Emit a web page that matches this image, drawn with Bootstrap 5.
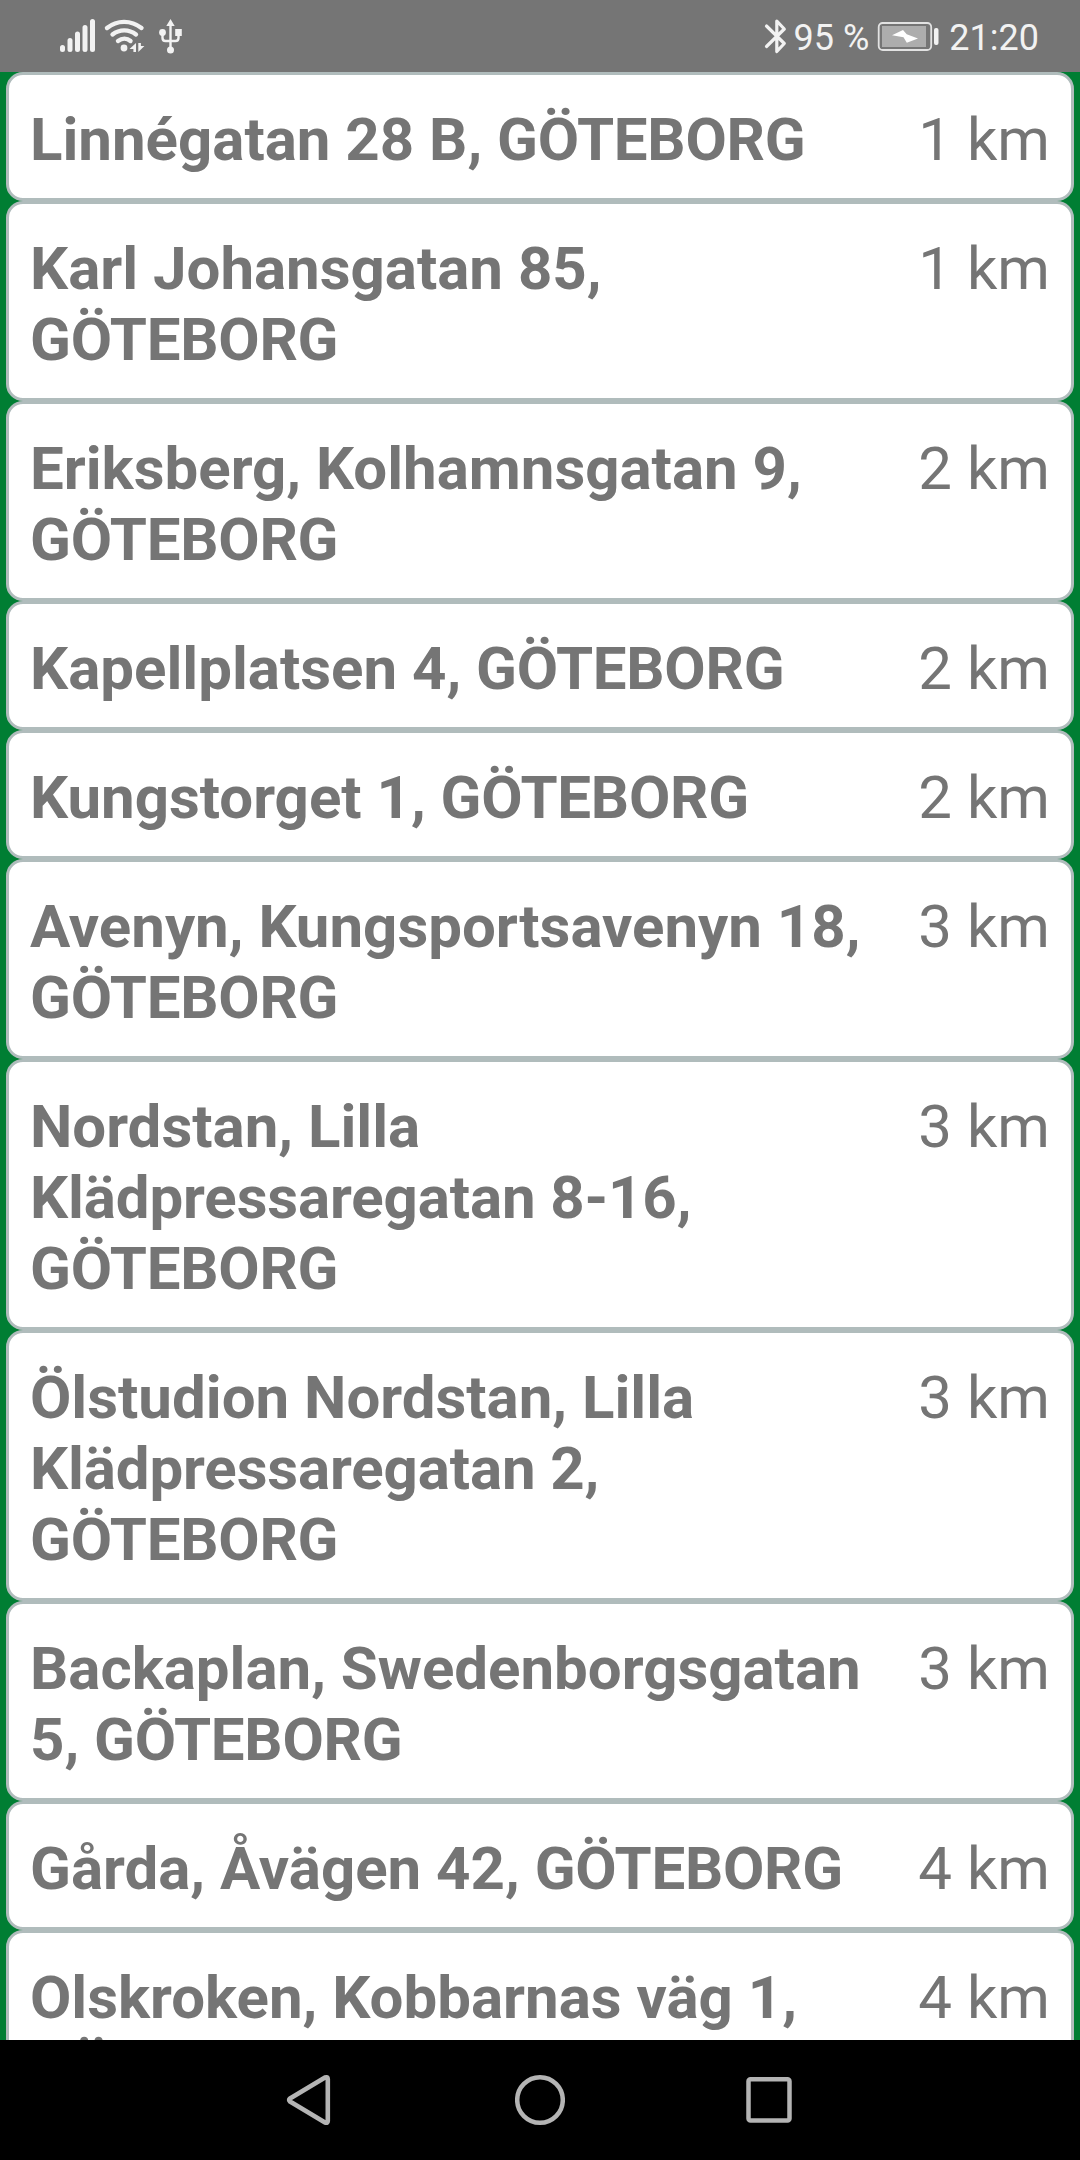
<!DOCTYPE html>
<html lang="sv">
<head>
<meta charset="utf-8">
<meta name="viewport" content="width=device-width, initial-scale=1">
<title>Butiker</title>
<link href="https://cdn.jsdelivr.net/npm/bootstrap@5.3.0/dist/css/bootstrap.min.css" rel="stylesheet">
<style>
  body { font-family: Roboto, "Noto Sans", sans-serif; color: #757575; background: #007e33; }
  .phone { height: 2160px; }
  .status-bar { height: 72px; background: #757575; color: #f2f2f2; font-size: 36px; line-height: 42px; padding: 0 41px 0 58px; }
  .status-bar svg, .nav-keys svg { display: block; flex: none; }
  .store-list { min-height: 0; padding: 0 6px; }
  .store { border: 3px solid #b0bcbc; border-radius: 17px; background: #fff; padding: 29px 21px 23px; font-size: 60px; line-height: 71px; gap: 36px; }
  .town { letter-spacing: -0.25px; }
  .street { letter-spacing: -0.12px; }
  .nav-keys { height: 120px; background: #000; padding: 0 284px; }
</style>
</head>
<body>
<div class="phone d-flex flex-column overflow-hidden">
  <header class="status-bar d-flex align-items-center justify-content-between flex-shrink-0">
    <svg width="130" height="72" viewBox="58 0 130 72" fill="none" stroke="#f2f2f2" stroke-linecap="round">
      <path stroke-width="5" d="M62.500 47.500v2M70 40.500v9M77.500 34v15.500M85 27.500v22M92.500 21.500v28"/>
      <path stroke-width="4.400" d="M107 28C117 19.800 131 19.800 141.500 28M112.500 34.500C119.500 29 129 29 136 34.500M118 41C122 38 127 38 130.500 41"/>
      <circle cx="124" cy="48" r="3.400" fill="#f2f2f2" stroke="none"/>
      <path fill="#f2f2f2" stroke="none" d="M136 43V52h-2.600v-3H129.500zM138.300 43h2.600v3h3.500L138.300 52z"/>
      <path stroke-width="2.400" d="M170.500 23V49M162.500 33v5q0 3 3 3h10q3 0 3-3v-5"/>
      <path fill="#f2f2f2" stroke="none" d="M170.500 19l4.200 7h-8.400zM175.200 29h6.600v7h-6.600z"/>
      <circle cx="162.500" cy="32.500" r="3.400" fill="#f2f2f2" stroke="none"/>
      <circle cx="170.500" cy="50" r="3.500" fill="#f2f2f2" stroke="none"/>
    </svg>
    <div class="d-flex align-items-center">
      <svg width="28" height="72" viewBox="763 0 28 72" fill="none" stroke="#f2f2f2" stroke-width="3.200" stroke-linecap="round" stroke-linejoin="round">
        <path d="M767.500 26L785.300 43.500L777.800 51.500V21L785.300 29L767.500 46.500"/>
      </svg>
      <span class="text-nowrap mt-1 ms-1">95 %</span>
      <svg class="ms-2" width="64" height="72" viewBox="877 0 64 72">
        <rect x="878.700" y="23" width="52.500" height="27" rx="4" fill="none" stroke="#e2e2e2" stroke-width="1.800"/>
        <path fill="#adadad" d="M882 26h44v21h-44z"/>
        <path fill="#fff" d="M892 35.200l11-5.200 3.700 4.300 11.300 4.200-11.200 4.200-3.300-5.400z"/>
        <rect x="934" y="28" width="4.500" height="17" rx="2" fill="#f2f2f2"/>
      </svg>
      <span class="ms-2 mt-1">21:20</span>
    </div>
  </header>

  <main class="store-list flex-grow-1 overflow-hidden">
    <div class="store d-flex justify-content-between align-items-start"><strong>Linnégatan 28 B, <span class="town">GÖTEBORG</span></strong><span class="text-nowrap">1 km</span></div>
    <div class="store d-flex justify-content-between align-items-start"><strong>Karl Johansgatan 85, <span class="town">GÖTEBORG</span></strong><span class="text-nowrap">1 km</span></div>
    <div class="store d-flex justify-content-between align-items-start"><strong>Eriksberg, Kolhamnsgatan 9, <span class="town">GÖTEBORG</span></strong><span class="text-nowrap">2 km</span></div>
    <div class="store d-flex justify-content-between align-items-start"><strong>Kapellplatsen 4, <span class="town">GÖTEBORG</span></strong><span class="text-nowrap">2 km</span></div>
    <div class="store d-flex justify-content-between align-items-start"><strong>Kungstorget 1, <span class="town">GÖTEBORG</span></strong><span class="text-nowrap">2 km</span></div>
    <div class="store d-flex justify-content-between align-items-start"><strong>Avenyn, Kungsportsavenyn 18, <span class="town">GÖTEBORG</span></strong><span class="text-nowrap">3 km</span></div>
    <div class="store d-flex justify-content-between align-items-start"><strong>Nordstan, Lilla <span class="street">Klädpressaregatan 8-16,</span> <span class="town">GÖTEBORG</span></strong><span class="text-nowrap">3 km</span></div>
    <div class="store d-flex justify-content-between align-items-start"><strong>Ölstudion Nordstan, Lilla <span class="street">Klädpressaregatan 2,</span> <span class="town">GÖTEBORG</span></strong><span class="text-nowrap">3 km</span></div>
    <div class="store d-flex justify-content-between align-items-start"><strong>Backaplan, Swedenborgsgatan 5, <span class="town">GÖTEBORG</span></strong><span class="text-nowrap">3 km</span></div>
    <div class="store d-flex justify-content-between align-items-start"><strong>Gårda, Åvägen 42, <span class="town">GÖTEBORG</span></strong><span class="text-nowrap">4 km</span></div>
    <div class="store d-flex justify-content-between align-items-start"><strong>Olskroken, Kobbarnas väg 1, <span class="town">GÖTEBORG</span></strong><span class="text-nowrap">4 km</span></div>
  </main>

  <nav class="nav-keys d-flex align-items-center justify-content-between flex-shrink-0">
    <svg width="50" height="60" viewBox="284 2070 50 60" fill="none" stroke="#b4b4b4" stroke-width="4.600" stroke-linejoin="round"><path d="M290 2098.500L325 2077.500q2.800-1 2.800 1.500V2121q0 2.500-2.800 1.500L290 2101.500q-1.500-1.500 0-3z"/></svg>
    <svg width="50" height="60" viewBox="515 2070 50 60" fill="none" stroke="#b4b4b4" stroke-width="4.500"><circle cx="540" cy="2100" r="22.800"/></svg>
    <svg width="50" height="60" viewBox="746 2070 50 60" fill="none" stroke="#b4b4b4" stroke-width="4.500"><rect x="748.500" y="2079.300" width="41" height="41.200" rx="2"/></svg>
  </nav>
</div>
<script src="https://cdn.jsdelivr.net/npm/bootstrap@5.3.0/dist/js/bootstrap.bundle.min.js"></script>
</body>
</html>
